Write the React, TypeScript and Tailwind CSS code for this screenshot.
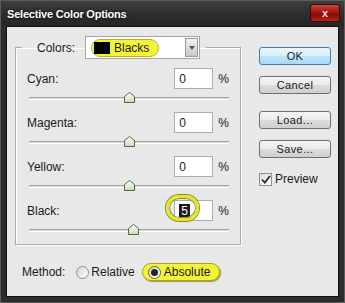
import React from "react";

const channels = [
  { name: "Cyan", value: 0 },
  { name: "Magenta", value: 0 },
  { name: "Yellow", value: 0 },
  { name: "Black", value: 5 },
];

function Thumb({ value }: { value: number }) {
  return (
    <svg
      className="absolute top-[-6px]"
      style={{ left: `calc(${50 + value / 2}% - 5.5px)` }}
      width="11"
      height="11"
      viewBox="0 0 11 11"
    >
      <defs>
        <linearGradient id="thumbFill" x1="0" y1="0" x2="0" y2="1">
          <stop offset="0" stopColor="#ffffff" />
          <stop offset="1" stopColor="#c9dcbc" />
        </linearGradient>
      </defs>
      <polygon
        points="5.5,0.5 10.5,4.5 10.5,10.5 0.5,10.5 0.5,4.5"
        fill="url(#thumbFill)"
        stroke="#4f6a3e"
        strokeWidth="1"
      />
    </svg>
  );
}

function Channel({ name, value, selected }: { name: string; value: number; selected?: boolean }) {
  return (
    <div className="h-[44px]">
      <div className="flex h-[21px] items-center justify-between pl-[11px] pr-[11px]">
        <span>{name}:</span>
        <div className="flex items-center gap-[5px]">
          <div className="relative flex h-[21px] w-[39px] items-center border border-[#abadb3] bg-white pl-[4px]">
            {selected ? (
              <span className="bg-[#1c1c1c] px-[2px] leading-[14px] text-white">{value}</span>
            ) : (
              <span>{value}</span>
            )}
            {selected && (
              <div className="absolute left-[-9px] top-[-6px] h-[26px] w-[33px] rounded-full border-[3px] border-[#e4e42c] shadow-[0_0_0_1px_#8d8d2a,inset_0_0_0_1px_#8d8d2a]" />
            )}
          </div>
          <span>%</span>
        </div>
      </div>
      <div className="relative ml-[13px] mr-[11px] mt-[8px] h-[3px] border-t border-b border-t-[#a4a4a4] border-b-white bg-[#d8d8d8]">
        <Thumb value={value} />
      </div>
    </div>
  );
}

function Btn({ label, primary }: { label: string; primary?: boolean }) {
  return (
    <button
      className={
        primary
          ? "flex h-[18px] w-[72px] items-center justify-center rounded-[3px] border border-[#3c7fb1] bg-[linear-gradient(180deg,#eaf6fd_0%,#d9f0fc_50%,#bee6fd_50%,#a7d9f5_100%)] text-[11px] tracking-[0.4px] text-[#1a1a1a]"
          : "flex h-[18px] w-[72px] items-center justify-center rounded-[3px] border border-[#707070] bg-[linear-gradient(180deg,#f4f4f4_0%,#ebebeb_50%,#dddddd_50%,#cfcfcf_100%)] text-[11px] tracking-[0.4px] text-[#1a1a1a]"
      }
    >
      {label}
    </button>
  );
}

export default function App() {
  return (
    <div className="flex h-[303px] w-[345px] flex-col border border-[#5c5c5c] bg-[#2c2c2c] font-['Liberation_Sans',Arial,sans-serif] text-[12px] text-[#1a1a1a]">
      {/* Title bar */}
      <div className="flex h-[25px] items-start bg-[linear-gradient(180deg,#3e3e3e_0%,#2c2c2c_60%,#262626_100%)] pl-[6px] pr-[4px]">
        <span className="mt-[7px] text-[11px] font-bold leading-[13px] tracking-[-0.2px] text-white [text-shadow:0_0_3px_#000]">
          Selective Color Options
        </span>
        <div className="ml-auto mt-[3px] flex h-[18px] w-[30px] items-center justify-center rounded-[3px] border border-[#3d0606] bg-[linear-gradient(180deg,#c4483a_0%,#a3140e_45%,#8c0808_60%,#b42418_100%)] text-[11px] font-bold leading-none text-[#f2d6d6]">
          x
        </div>
      </div>

      {/* Client area */}
      <div className="mx-[5px] mb-[5px] flex flex-1 flex-col border border-[#111] bg-[#e8e8e8] pl-[8px] pt-[9px]">
        <div className="flex">
          <div className="flex w-[226px] flex-col">
            <fieldset className="border border-[#a9a9a9] pt-[9px] shadow-[inset_1px_1px_0_#fff,1px_1px_0_#fff]">
              <legend className="ml-[6px] flex items-center pl-[15px] pr-[6px]">
                <span>Colors:</span>
                <div className="ml-[10px] flex h-[23px] w-[115px] items-center border border-[#a5a5a5] bg-white pl-[5px] pr-[1px]">
                  <div className="flex h-[18px] items-center gap-[4px] rounded-full border border-[#b4b41e] bg-[#f4f43a] pl-[2px] pr-[9px]">
                    <div className="h-[12px] w-[16px] bg-black" />
                    <span>Blacks</span>
                  </div>
                  <div className="ml-auto flex h-[19px] w-[13px] items-center justify-center border border-[#9a9a9a] bg-[linear-gradient(180deg,#f2f2f2,#c8c8c8)]">
                    <div className="h-0 w-0 border-x-[3px] border-t-[4px] border-x-transparent border-t-[#555]" />
                  </div>
                </div>
              </legend>
              {channels.map((c) => (
                <Channel key={c.name} name={c.name} value={c.value} selected={c.name === "Black"} />
              ))}
            </fieldset>

            <div className="mt-[18px] flex h-[18px] items-center pl-[7px]">
              <span>Method:</span>
              <div className="ml-[11px] h-[13px] w-[13px] rounded-full border border-[#8e8f8f] bg-[linear-gradient(135deg,#d4d4d4,#ffffff)]" />
              <span className="ml-[2px]">Relative</span>
              <div className="ml-[7px] flex h-[18px] items-center rounded-full border border-[#a8a81c] bg-[#f2f23a] pl-[5px] pr-[9px] shadow-[1px_1px_1px_#9a9a50]">
                <div className="flex h-[13px] w-[13px] items-center justify-center rounded-full border border-[#5d5d5d] bg-[linear-gradient(135deg,#d4d4d4,#ffffff)]">
                  <div className="h-[7px] w-[7px] rounded-full bg-[#1f2a1a]" />
                </div>
                <span className="ml-[3px]">Absolute</span>
              </div>
            </div>
          </div>

          {/* Buttons */}
          <div className="ml-[18px] mt-[11px] flex flex-col">
            <Btn label="OK" primary />
            <div className="mt-[11px]">
              <Btn label="Cancel" />
            </div>
            <div className="mt-[17px]">
              <Btn label="Load..." />
            </div>
            <div className="mt-[11px]">
              <Btn label="Save..." />
            </div>
            <div className="mt-[12px] flex items-center">
              <div className="flex h-[13px] w-[13px] items-center justify-center border border-[#8e8f8f] bg-[linear-gradient(135deg,#dcdcdc,#ffffff)]">
                <svg width="10" height="9" viewBox="0 0 10 9">
                  <path d="M1 4.5 L3.8 7.5 L9 1" fill="none" stroke="#2a2a2a" strokeWidth="1.8" />
                </svg>
              </div>
              <span className="ml-[3px]">Preview</span>
            </div>
          </div>
        </div>
      </div>
    </div>
  );
}
